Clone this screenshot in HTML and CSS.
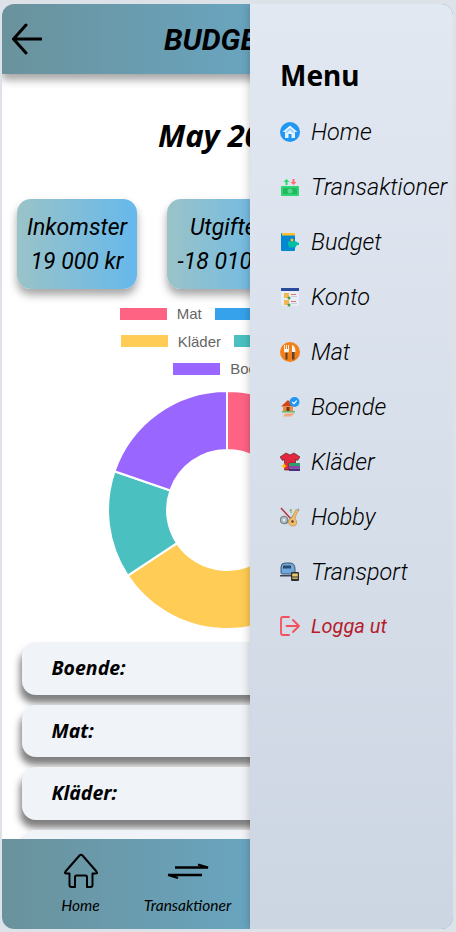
FILE: index.html
```html
<!DOCTYPE html>
<html lang="sv">
<head>
    <meta charset="UTF-8">
    <title>Budget</title>
    <link rel="stylesheet" href="styles.css">
</head>
<body>
<div class="app">
    <header class="topbar">
        <svg class="back" viewBox="0 0 30 32" width="30" height="32"><path d="M29 16H2M14 2 1.500 16 14 30" fill="none" stroke="#000" stroke-width="3" stroke-linecap="round" stroke-linejoin="round"/></svg>
        <h1>BUDGET</h1>
    </header>

    <main class="content">
        <h2 class="month">May 2024</h2>
        <div class="cards">
            <div class="card"><span>Inkomster</span><span>19 000 kr</span></div>
            <div class="card"><span>Utgifter</span><span>-18 010 kr</span></div>
            <div class="card"><span>Kvar</span><span>990 kr</span></div>
        </div>

        <div class="legend">
            <div class="legend-row">
                <span class="key"><i class="swatch red"></i>Mat</span>
                <span class="key"><i class="swatch blue"></i>Transport</span>
            </div>
            <div class="legend-row">
                <span class="key"><i class="swatch yellow"></i>Kläder</span>
                <span class="key"><i class="swatch teal"></i>Hobby</span>
            </div>
            <div class="legend-row">
                <span class="key"><i class="swatch purple"></i>Boende</span>
            </div>
        </div>

        <svg class="donut" viewBox="0 0 240 240" width="240" height="240">
            <g stroke="#fff" stroke-width="2">
                <path fill="#ff6384" d="M120 1A119 119 0 0 1 233.200 83.200L177 101.500A60 60 0 0 0 120 60Z"/>
                <path fill="#36a2eb" d="M233.200 83.200A119 119 0 0 1 211.200 196.500L166 158.600A60 60 0 0 0 177 101.500Z"/>
                <path fill="#ffcd56" d="M211.200 196.500A119 119 0 0 1 20.800 185.700L70 153.100A60 60 0 0 0 166 158.600Z"/>
                <path fill="#4bc0c0" d="M20.800 185.700A119 119 0 0 1 7.500 81.300L63.300 100.500A60 60 0 0 0 70 153.100Z"/>
                <path fill="#9966ff" d="M7.500 81.300A119 119 0 0 1 120 1V60A60 60 0 0 0 63.300 100.500Z"/>
            </g>
        </svg>

        <ul class="rows">
            <li>Boende:</li>
            <li>Mat:</li>
            <li>Kläder:</li>
            <li>Hobby:</li>
        </ul>
    </main>

    <nav class="bottombar">
        <a class="tab" href="#">
            <svg viewBox="0 0 36 36" width="36" height="36"><path d="M12 34H8.500Q6.500 34 6.500 32V20.500H3.500Q1 20.500 2.500 18.500L16.500 2.500Q18 1 19.500 2.500L33.500 18.500Q35 20.500 32.500 20.500H29.500V32Q29.500 34 27.500 34H24V24Q24 22.500 22.500 22.500H13.500Q12 22.500 12 24Z" fill="none" stroke="#000" stroke-width="2" stroke-linejoin="round"/></svg>
            <span>Home</span>
        </a>
        <a class="tab" href="#">
            <svg viewBox="0 0 42 36" width="42" height="36"><path d="M8 14.500H41L31 11.500M1 22H35M1 22 11 25" fill="none" stroke="#000" stroke-width="2.300"/></svg>
            <span>Transaktioner</span>
        </a>
    </nav>

    <aside class="menu">
        <h3>Menu</h3>
        <a class="menu-item" href="#">
            <svg viewBox="0 0 20 20" width="20" height="20"><circle cx="10" cy="10" r="10" fill="#2196f3"/><path d="M10 3.500 2.500 10H5V16H15V10H17.500Z" fill="#e3f2fd"/><path d="M10 6 5 10.500H6.500V11L10 8 13.500 11V10.500H15Z" fill="#90caf9"/><rect x="8.500" y="12" width="3" height="4" fill="#2196f3"/></svg>
            <span>Home</span>
        </a>
        <a class="menu-item" href="#">
            <svg viewBox="0 0 20 20" width="20" height="20"><rect x="1" y="9" width="18" height="10" rx="1" fill="#2ed573"/><rect x="3" y="11" width="14" height="6" fill="#20b95c"/><circle cx="10" cy="14" r="2.500" fill="#58d68d"/><path d="M6.500 2 9.500 5H7.500V8H5.500V5H3.500Z" fill="#2ed573"/><path d="M13.500 8 10.500 5H12.500V2H14.500V5H16.500Z" fill="#ff6b6b"/></svg>
            <span>Transaktioner</span>
        </a>
        <a class="menu-item" href="#">
            <svg viewBox="0 0 20 20" width="20" height="20"><rect x="1" y="1" width="14" height="18" rx="1" fill="#0288d1"/><rect x="2" y="1" width="13" height="2.500" fill="#fbc02d"/><path d="M8 9.500H16L19 11V13H17L15.500 15.500H9.500L8 13Z" fill="#00bfa5"/><circle cx="12" cy="8" r="1.500" fill="#fbc02d"/></svg>
            <span>Budget</span>
        </a>
        <a class="menu-item" href="#">
            <svg viewBox="0 0 20 20" width="20" height="20"><rect x="1" y="1" width="18" height="18" rx="2" fill="#e8edf7"/><rect x="1" y="1" width="18" height="3" fill="#2a4a9c"/><rect x="4" y="6" width="5" height="5" fill="#f2b84b"/><rect x="4" y="13" width="5" height="5" fill="#f2b84b"/><circle cx="9" cy="11" r="1.500" fill="#43a047"/><circle cx="9" cy="18" r="1.500" fill="#43a047"/><rect x="11" y="7" width="5" height="1" fill="#e57373"/><rect x="11" y="14" width="5" height="1" fill="#e57373"/><rect x="11" y="9" width="6" height="1" fill="#c5cfe6"/><rect x="11" y="16" width="6" height="1" fill="#c5cfe6"/></svg>
            <span>Konto</span>
        </a>
        <a class="menu-item" href="#">
            <svg viewBox="0 0 20 20" width="20" height="20"><circle cx="10" cy="10" r="10" fill="#f57f17"/><path d="M4 3V9Q4 10.500 5.500 10.500H7.500Q9 10.500 9 9V3H8V7H7V3H6V7H5V3Z" fill="#f5f5f5"/><rect x="5.500" y="10.500" width="2" height="7" fill="#5d4037"/><path d="M12 3Q15.500 4 15.500 10H12Z" fill="#f5f5f5"/><rect x="12" y="10" width="2.500" height="7.500" fill="#5d4037"/></svg>
            <span>Mat</span>
        </a>
        <a class="menu-item" href="#">
            <svg viewBox="0 0 20 20" width="20" height="20"><path d="M1 9.500 8 3 13 8V9.500Z" fill="#d84315"/><rect x="3" y="9.500" width="10" height="4.500" fill="#ef8a3c"/><rect x="6.500" y="10" width="3" height="4" fill="#6d3a1a"/><rect x="2" y="14" width="13" height="1.500" fill="#66bb6a"/><path d="M3 19.500 5 16.500H10L15 16 11 19.500Z" fill="#f4a582"/><circle cx="14.500" cy="5" r="5" fill="#2196f3"/><path d="M12.300 5 14 6.700 16.700 3.700" fill="none" stroke="#fff" stroke-width="1.200"/></svg>
            <span>Boende</span>
        </a>
        <a class="menu-item" href="#">
            <svg viewBox="0 0 20 20" width="20" height="20"><path d="M6 1 10 3 14 1 20 5 17.500 8.500 15.500 7.500V11H9V18H4.500V7.500L2.500 8.500 0 5Z" fill="#e5263f" stroke="#3a1a1a" stroke-width=".6"/><path d="M4 11 5 13 7 14 5 15 4 17 3 15 1 14 3 13Z" fill="#ffc107"/><rect x="9" y="11" width="11" height="3" fill="#2e9e6b"/><rect x="9" y="14" width="11" height="2.500" fill="#8e44ad"/><rect x="9" y="16.500" width="11" height="2.500" fill="#4a2a7a"/></svg>
            <span>Kläder</span>
        </a>
        <a class="menu-item" href="#">
            <svg viewBox="0 0 20 20" width="20" height="20"><path d="M1 1 11 12" stroke="#b23a48" stroke-width="1.600"/><path d="M19 2 6 17" stroke="#5fa8a8" stroke-width="1.200"/><circle cx="4" cy="13" r="3.800" fill="#b0bec5" stroke="#555" stroke-width=".7"/><circle cx="4" cy="13" r="1.200" fill="#eceff1"/><path d="M18.500 3.500 16 2.500 13.500 7.500 11 11.500Q7.500 12 8.500 15.500 9.500 19.500 13.500 19 17.500 18.500 16.500 14 16 12.500 15 12L16.500 7Z" fill="#f2bd6b" stroke="#b07a2c" stroke-width=".5"/><circle cx="12.500" cy="14.500" r="1.300" fill="#5d4037"/><path d="M11 2V6M9.500 4 11 2.500" stroke="#6a9f58" stroke-width="1" fill="none"/></svg>
            <span>Hobby</span>
        </a>
        <a class="menu-item" href="#">
            <svg viewBox="0 0 20 20" width="20" height="20"><path d="M1 11V5Q1 1 5 1H10Q15 1 15 7V12H3Q1 12 1 11Z" fill="#6fa8dc" stroke="#2c3e50" stroke-width=".8"/><rect x="3" y="3.500" width="8" height="3" fill="#2c4a6e"/><rect x="0" y="13" width="11" height="1.500" fill="#37474f"/><rect x="11" y="10" width="8" height="9" rx="1" fill="#2f2f2f"/><rect x="12.200" y="11.500" width="5.600" height="3" fill="#e8c96a"/><rect x="12.200" y="15.500" width="5.600" height="1.300" fill="#e8c96a"/></svg>
            <span>Transport</span>
        </a>
        <a class="menu-item logout" href="#">
            <svg viewBox="0 0 20 20" width="20" height="20"><path d="M9 1H3Q1 1 1 3V17Q1 19 3 19H9M6.500 10H19M13 4 19 10 13 16" fill="none" stroke="#f4505e" stroke-width="1.800" stroke-linecap="round" stroke-linejoin="round"/></svg>
            <span>Logga ut</span>
        </a>
    </aside>
</div>
</body>
</html>
```

FILE: styles.css
```css
html, body {
    margin: 0;
    padding: 0;
    height: 932px;
    overflow: hidden;
    background: #dde1e8;
}
/* app frame */
.app {
    position: relative;
    width: 451px;
    height: 925px;
    margin: 4px 3px 3px 2px;
    display: flex;
    flex-direction: column;
    background: #fff;
    border-radius: 12px;
    overflow: hidden;
    font-family: Roboto, sans-serif;
    color: #000;
}
/* top bar */
.topbar {
    position: relative;
    z-index: 2;
    flex: none;
    height: 70px;
    padding-right: 16px;
    box-sizing: border-box;
    display: flex;
    align-items: center;
    justify-content: center;
    background: linear-gradient(90deg, #6a929c, #68b4dc);
    box-shadow: 0 6px 8px rgba(0, 0, 0, .35);
}
.topbar h1 {
    margin: 0;
    font-size: 30px;
    font-style: italic;
    font-weight: 700;
}
.back {
    position: absolute;
    left: 10px;
    top: 19px;
}
/* scrolling part */
.content {
    flex: 1;
    min-height: 0;
    padding-right: 1px;
    overflow: hidden;
    display: flex;
    flex-direction: column;
    align-items: center;
}
.month {
    margin: 39px 0 0;
    height: 45px;
    line-height: 45px;
    font-family: "Noto Sans", sans-serif;
    font-size: 31px;
    font-style: italic;
    font-weight: 700;
}
.cards {
    display: flex;
    gap: 30px;
    margin-top: 41px;
}
.card {
    width: 120px;
    height: 90px;
    display: flex;
    flex-direction: column;
    align-items: center;
    justify-content: center;
    gap: 7px;
    border-radius: 14px;
    background: linear-gradient(90deg, #9ac3c8, #66b8ec);
    box-shadow: 0 6px 8px rgba(0, 0, 0, .35);
    font-size: 23px;
    font-style: italic;
    white-space: nowrap;
}
/* chart */
.legend {
    margin-top: 11px;
    padding-left: 1px;
    display: flex;
    flex-direction: column;
    font-family: "Liberation Sans", sans-serif;
    font-size: 15px;
    color: #666;
}
.legend-row {
    height: 27.500px;
    display: flex;
    align-items: center;
    justify-content: center;
    gap: 13px;
}
.key {
    display: flex;
    align-items: center;
    gap: 10px;
}
.swatch {
    width: 47px;
    height: 12px;
}
.red { background: #ff6384; }
.blue { background: #36a2eb; }
.yellow { background: #ffcd56; }
.teal { background: #4bc0c0; }
.purple { background: #9966ff; }
.donut {
    flex: none;
    margin-top: 7px;
}
/* category rows */
.rows {
    flex: none;
    list-style: none;
    width: 411px;
    margin: 12.500px 0 0;
    padding: 0;
    display: flex;
    flex-direction: column;
    gap: 10px;
    font-family: "Noto Sans", sans-serif;
    font-size: 19.500px;
    font-style: italic;
    font-weight: 700;
}
.rows li {
    flex: none;
    height: 52.500px;
    line-height: 52.500px;
    padding-left: 30px;
    background: #f0f3f8;
    border-radius: 14px;
    box-shadow: -2px 8px 7px rgba(0, 0, 0, .5);
}
/* bottom bar */
.bottombar {
    position: relative;
    z-index: 2;
    flex: none;
    height: 90px;
    padding-left: 25px;
    display: flex;
    background: linear-gradient(90deg, #6a929c, #68b4dc);
}
.tab {
    width: 107px;
    display: flex;
    flex-direction: column;
    align-items: center;
    padding-top: 14px;
    color: #000;
    text-decoration: none;
    font-family: Lato, sans-serif;
    font-size: 15.500px;
    font-style: italic;
}
.tab span {
    margin-top: 7px;
    white-space: nowrap;
}
/* side menu */
.menu {
    position: absolute;
    z-index: 3;
    top: 0;
    right: 0;
    bottom: 0;
    width: 203px;
    padding: 53px 0 0 30px;
    box-sizing: border-box;
    border-radius: 0 12px 12px 0;
    background: linear-gradient(180deg, #e2e8f2, #ccd6e2);
    box-shadow: 0 0 10px rgba(0, 0, 0, .25);
}
.menu h3 {
    margin: 0 0 11px;
    height: 36px;
    line-height: 36px;
    font-family: "Noto Sans", sans-serif;
    font-size: 28px;
    font-weight: 700;
}
.menu-item {
    height: 55px;
    display: flex;
    align-items: center;
    gap: 11px;
    color: #000;
    text-decoration: none;
    font-size: 23.400px;
    font-style: italic;
    font-weight: 300;
    white-space: nowrap;
}
.menu-item svg {
    flex: none;
}
.logout {
    margin-top: -1px;
    color: #b71c2c;
    font-size: 20px;
    font-weight: 400;
}
```
